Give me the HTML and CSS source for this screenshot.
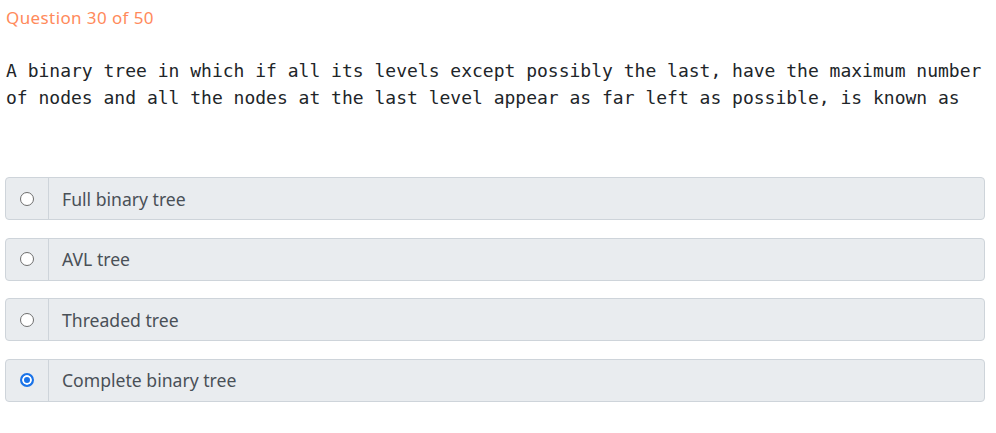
FILE: index.html
```html
<!DOCTYPE html>
<html>
<head>
<meta charset="utf-8">
<link rel="stylesheet" href="styles.css">
</head>
<body>
<div class="quiz">
  <div class="counter">Question 30 of 50</div>
  <div class="question">A binary tree in which if all its levels except possibly the last, have the maximum number<br>of nodes and all the nodes at the last level appear as far left as possible, is known as</div>
  <div class="options">
    <label class="option"><span class="radio-cell"><span class="radio"></span></span><span class="text">Full binary tree</span></label>
    <label class="option"><span class="radio-cell"><span class="radio"></span></span><span class="text">AVL tree</span></label>
    <label class="option"><span class="radio-cell"><span class="radio"></span></span><span class="text">Threaded tree</span></label>
    <label class="option"><span class="radio-cell"><span class="radio checked"></span></span><span class="text">Complete binary tree</span></label>
  </div>
</div>
</body>
</html>
```
FILE: styles.css
```css
html, body {
  margin: 0;
  padding: 0;
  background: #ffffff;
}
.quiz {
  padding: 6px 11px 0 5px;
  font-family: "Noto Sans", "Open Sans", sans-serif;
}
.counter {
  color: #ff8a5b;
  font-size: 17px;
  letter-spacing: 0.4px;
  line-height: 24px;
  padding-left: 1px;
}
.question {
  margin-top: 27px;
  font-family: "DejaVu Sans Mono", "Liberation Mono", monospace;
  font-size: 18px;
  line-height: 27px;
  color: #212529;
  padding-left: 1px;
  white-space: nowrap;
}
.options {
  margin-top: 66px;
  display: flex;
  flex-direction: column;
  gap: 17.5px;
}
.option {
  display: flex;
  height: 43px;
  box-sizing: border-box;
  border: 1px solid #ced4da;
  border-radius: 4px;
  background: #e9ecef;
  align-items: stretch;
}
.radio-cell {
  width: 42px;
  flex: none;
  display: flex;
  align-items: center;
  justify-content: center;
  border-right: 1px solid #ced4da;
}
.radio {
  width: 14px;
  height: 14px;
  box-sizing: border-box;
  border-radius: 50%;
  border: 1px solid #6e6e6e;
  background: #fff;
}
.radio.checked {
  border: 2px solid #1a73e8;
  background: #1a73e8;
  box-shadow: inset 0 0 0 2px #fff;
}
.text {
  display: flex;
  align-items: center;
  padding-left: 13px;
  font-size: 17.6px;
  color: #495057;
}
```
